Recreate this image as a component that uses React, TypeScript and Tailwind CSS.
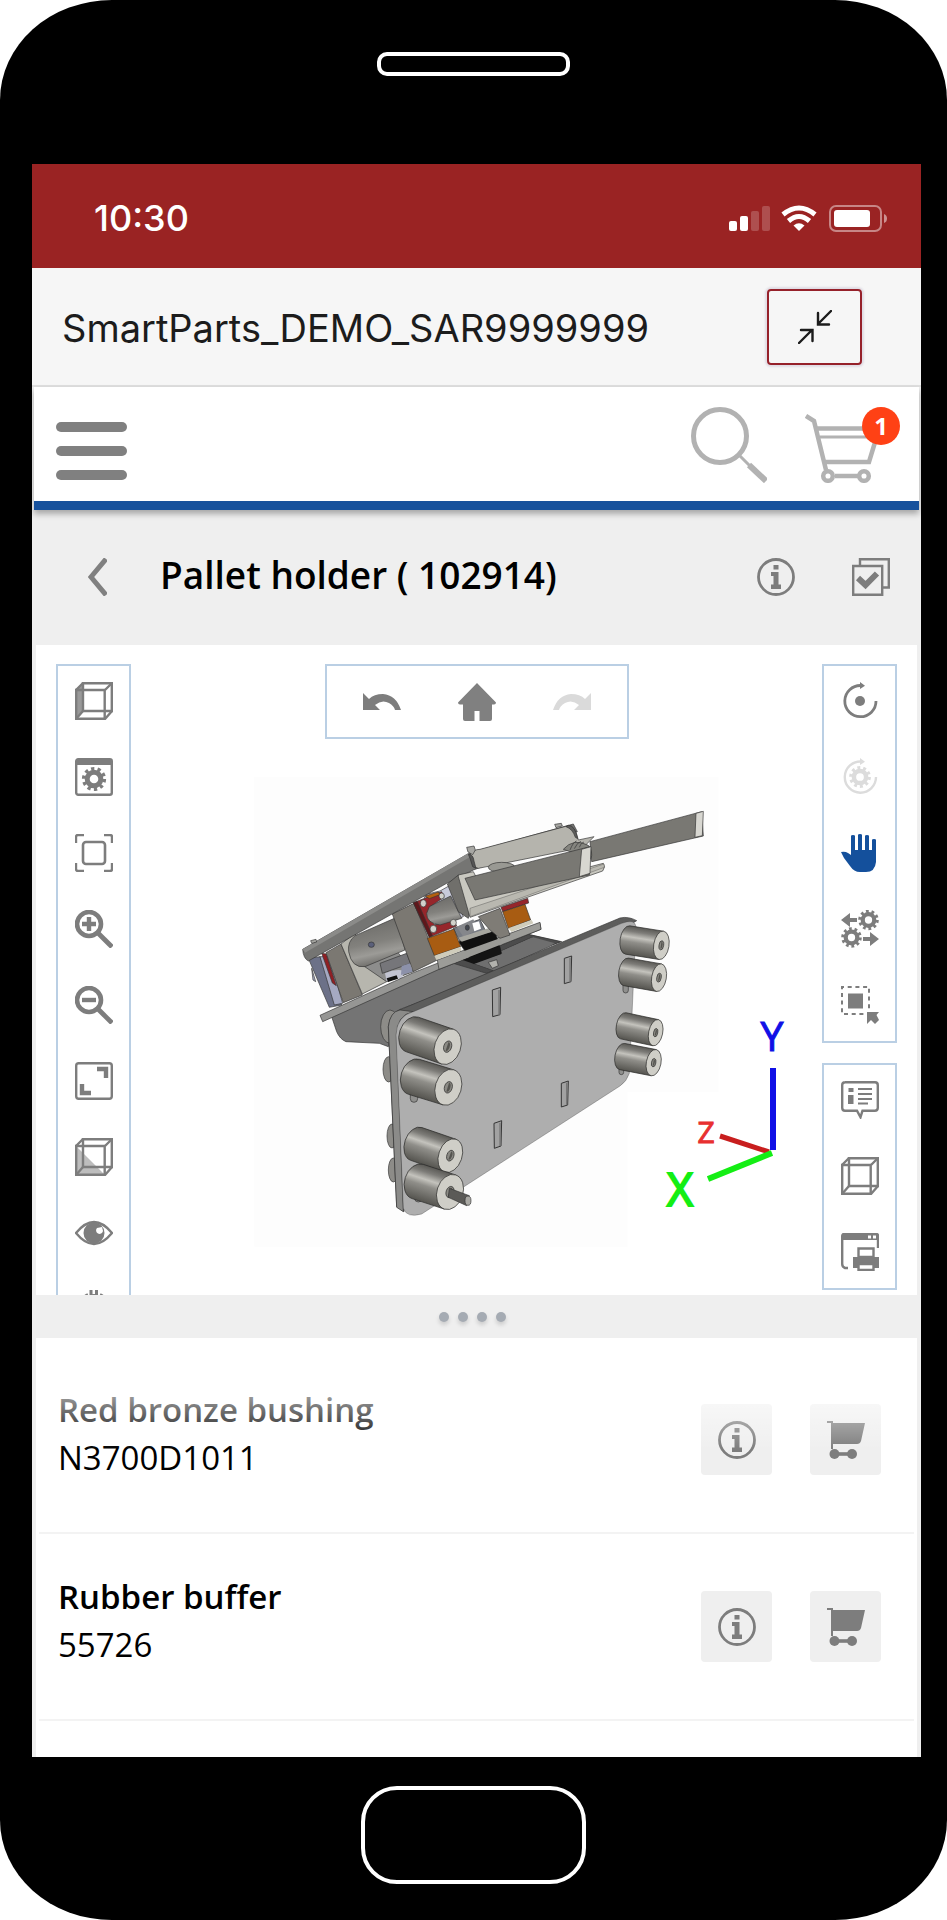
import React from "react";

type IconProps = { children: React.ReactNode; className?: string };

function Icon({ children, className = "text-[#7d7d7d]" }: IconProps) {
  return (
    <svg viewBox="0 0 38 38" fill="none" stroke="currentColor" strokeWidth="2.4" aria-hidden="true" className={`block size-[38px] shrink-0 ${className}`}>
      {children}
    </svg>
  );
}

function Gear({ cx, cy, r }: { cx: number; cy: number; r: number }) {
  const tooth = (2 * Math.PI * r) / 20;
  return (
    <g>
      <circle cx={cx} cy={cy} r={r * 0.68} strokeWidth={r * 0.5} />
      <circle cx={cx} cy={cy} r={r} strokeWidth={r * 0.42} strokeDasharray={`${tooth} ${tooth}`} />
    </g>
  );
}

function CubeLines() {
  return (
    <>
      <path d="M1.200 8h28.500v28.800H1.200zM8 1.200h28.800V29H8z" />
      <path d="M1 8l7-7M30 8l7-7M30 37l7-8M1 37l7-8" />
    </>
  );
}

const CubeSide = () => (
  <Icon>
    <path d="M1 8l7-7v28l-7 8z" fill="#999" stroke="none" />
    <CubeLines />
  </Icon>
);
const CubeShaded = () => (
  <Icon>
    <path d="M1 8l29 29H1z" fill="#bdbdbd" stroke="none" />
    <CubeLines />
  </Icon>
);
const CubeOutline = () => (
  <Icon>
    <CubeLines />
  </Icon>
);
const WindowGear = () => (
  <Icon>
    <rect x="1.200" y="1.200" width="35.600" height="35.600" rx="2" />
    <path d="M1 1h36v6H1z" fill="currentColor" stroke="none" />
    <Gear cx={19} cy={21} r={10} />
  </Icon>
);
const FitView = () => (
  <Icon>
    <path d="M1 9V3q0-2 2-2h6M29 1h6q2 0 2 2v6M37 29v6q0 2-2 2h-6M9 37H3q-2 0-2-2v-6" />
    <rect x="8" y="8" width="22" height="22" rx="3" strokeWidth="2.6" />
  </Icon>
);
const ZoomLens = ({ plus = false }: { plus?: boolean }) => (
  <Icon>
    <circle cx="14" cy="14" r="12" strokeWidth="4.600" />
    <path d="M23 23l14 14" strokeWidth="4.8" />
    <path d={plus ? "M7 14h14M14 7v14" : "M7 14h14"} strokeWidth="4.4" />
  </Icon>
);
const FullScreen = () => (
  <Icon>
    <rect x="1.200" y="1.200" width="35.600" height="35.600" rx="2.5" />
    <path d="M22 7h9v9M7 22v9h9" strokeWidth="4.4" />
  </Icon>
);
const Eye = () => (
  <Icon>
    <path d="M1 19Q10 8 19 8T37 19Q28 30 19 30T1 19z" />
    <circle cx="19" cy="19" r="10.500" fill="currentColor" stroke="none" />
    <path d="M22 14a3.5 3.5 0 1 0 6 3l-1-4z" fill="#fff" stroke="none" />
  </Icon>
);
const GearOnly = () => (
  <Icon>
    <circle cx="19" cy="14" r="7" strokeWidth="6" />
    <path d="M16 0v6M21.500 0v6" strokeWidth="3" />
    <path d="M11 4l2 4M27 4l-2 4" strokeWidth="3" />
  </Icon>
);
const Orbit = () => (
  <Icon>
    <path d="M20 3.5A15.6 15.6 0 1 0 35 19" strokeWidth="2.8" />
    <path d="M19 0l5 3.8L19 7z" fill="currentColor" stroke="none" />
    <circle cx="19" cy="19" r="5" fill="currentColor" stroke="none" />
  </Icon>
);
const OrbitGear = () => (
  <Icon className="text-[#dcdcdc]">
    <path d="M20 3.5A15.6 15.6 0 1 0 35 19" strokeWidth="2.4" />
    <path d="M19 0l5 3.8L19 7z" fill="currentColor" stroke="none" />
    <Gear cx={19} cy={19} r={9} />
  </Icon>
);
const Hand = () => (
  <Icon className="text-[#14509c]">
    <path
      d="M0 18q4-1 7 1l3 2V2q0-1 2-1t2 1v14h3V1q0-1 2-1t2 1v15h3V2q0-1 2-1t2 1v14h3V6q0-1 2-1t2 1v22q-1 10-10 10h-6Q13 38 9 32L3 24Q1 20 0 18z"
      fill="currentColor"
      stroke="none"
    />
  </Icon>
);
const MoveParts = () => (
  <Icon>
    <path d="M0 10l9-7v5h7v4H9v5zM38 29l-9-7v5h-7v4h7v5z" fill="currentColor" stroke="none" />
    <Gear cx={27.5} cy={10} r={8.5} />
    <Gear cx={10.5} cy={27.5} r={8.5} />
  </Icon>
);
const SelectArea = () => (
  <Icon>
    <rect x="1" y="1" width="27" height="27" strokeWidth="2" strokeDasharray="4 3.7" strokeDashoffset="2" />
    <path d="M7 7.5h15v15H7z" fill="currentColor" stroke="none" />
    <path d="M26 26h12l-2.5 3L38 34l-4 4-4-4-4 4z" fill="currentColor" stroke="none" />
  </Icon>
);
const InfoBubble = () => (
  <Icon>
    <path d="M4 1.200h30q2.800 0 2.800 3v22.500q0 3-3 3H21.500l-2 6.500-3.500-6.500H4q-2.800 0-2.800-3V4q0-2.800 3-2.800z" />
    <path d="M17 8h14M17 13h14M17 18h14M17 22.500h10" strokeWidth="2" />
    <path d="M7.500 7h5v4h-5zM7 14h5.500v9H7z" fill="currentColor" stroke="none" />
  </Icon>
);
const PrintView = () => (
  <Icon>
    <path d="M7 35H4q-2.800-1-2.800-4V3q0-2 2-2h32q1.800 0 1.800 2v12" />
    <path d="M1 1h36v6H1z" fill="currentColor" stroke="none" />
    <path d="M27 2.500h3v3h-3zM32 2.500h3v3h-3z" fill="#fff" stroke="none" />
    <path d="M12 24h26v11H12z" fill="currentColor" stroke="none" />
    <path d="M17.500 15.500h15V24h-15zM17.500 31h15v6h-15z" fill="#fff" />
  </Icon>
);
const Undo = () => (
  <Icon>
    <path d="M0 10v17h17l-5-5q7-6 14-2 5 3 6 7h6Q33 12 20 11 11 11 6 16z" fill="currentColor" stroke="none" />
  </Icon>
);
const Redo = () => (
  <Icon className="text-[#dadada]">
    <path d="M38 10v17H21l5-5q-7-6-14-2-5 3-6 7H0Q5 12 18 11q9 0 14 5z" fill="currentColor" stroke="none" />
  </Icon>
);
const Home = () => (
  <Icon className="text-[#808080]">
    <path d="M19 0l19 19.500q0 2-2 2h-2V36q0 2-2 2H21.500V28h-5v10H7q-2 0-2-2V21.500H2q-2 0-2-2z" fill="currentColor" stroke="none" />
  </Icon>
);
const Info = () => (
  <Icon>
    <circle cx="19" cy="19" r="17.500" strokeWidth="2.800" />
    <path d="M16.500 7h5v4.500h-5zM14 14h7.500v12.500H24V31H14v-4.500h2.500V18H14z" fill="currentColor" stroke="none" />
  </Icon>
);
const CheckStack = () => (
  <Icon>
    <path d="M8 7V1.200h28.800V29.500H31" />
    <path d="M1.200 8h29v28.800h-29z" />
    <path d="M6 20l7.500 7L25 15.500" strokeWidth="6" />
  </Icon>
);
const Cart = () => (
  <Icon>
    <path d="M0 0h6v2h32l-4 18q-1 3-4 3H6v5H4V2H0z" fill="currentColor" stroke="none" />
    <circle cx="7.500" cy="33" r="5" fill="currentColor" stroke="none" />
    <circle cx="25" cy="33" r="5" fill="currentColor" stroke="none" />
    <path d="M7 33h19" strokeWidth="3.600" />
  </Icon>
);

type Tool = { label: string; icon: React.ReactNode; disabled?: boolean };

function Toolbar({ label, tools, row = false }: { label: string; tools: Tool[]; row?: boolean }) {
  return (
    <div
      role="toolbar"
      aria-label={label}
      className={
        row
          ? "flex h-[75px] items-center gap-[57px] border-2 border-[#bacfe4] bg-white px-9"
          : "flex w-[75px] flex-col items-center gap-[38px] border-2 border-[#bacfe4] bg-white pt-4 pb-[17px]"
      }
    >
      {tools.map((tool) => (
        <button key={tool.label} type="button" aria-label={tool.label} disabled={tool.disabled}>
          {tool.icon}
        </button>
      ))}
    </div>
  );
}

const viewTools: Tool[] = [
  { label: "Views", icon: <CubeSide /> },
  { label: "Settings", icon: <WindowGear /> },
  { label: "Fit to view", icon: <FitView /> },
  { label: "Zoom in", icon: <ZoomLens plus /> },
  { label: "Zoom out", icon: <ZoomLens /> },
  { label: "Full screen", icon: <FullScreen /> },
  { label: "Shading", icon: <CubeShaded /> },
  { label: "Visibility", icon: <Eye /> },
  { label: "Options", icon: <GearOnly /> },
];
const historyTools: Tool[] = [
  { label: "Undo", icon: <Undo /> },
  { label: "Home view", icon: <Home /> },
  { label: "Redo", icon: <Redo />, disabled: true },
];
const motionTools: Tool[] = [
  { label: "Orbit", icon: <Orbit /> },
  { label: "Orbit part", icon: <OrbitGear />, disabled: true },
  { label: "Pan", icon: <Hand /> },
  { label: "Move parts", icon: <MoveParts /> },
  { label: "Select area", icon: <SelectArea /> },
];
const outputTools: Tool[] = [
  { label: "Annotations", icon: <InfoBubble /> },
  { label: "Wireframe", icon: <CubeOutline /> },
  { label: "Print", icon: <PrintView /> },
];

function Cylinder({ x, y, rx, ry, length, angle }: { x: number; y: number; rx: number; ry: number; length: number; angle: number }) {
  return (
    <g transform={`translate(${x} ${y}) rotate(${angle})`} stroke="#2c2c2a" strokeWidth="2">
      <path d={`M0 ${-ry}H${-length}A${rx} ${ry} 0 0 0 ${-length} ${ry}H0z`} fill="url(#steel)" />
      <ellipse rx={rx} ry={ry} fill="#cfcec7" />
      <ellipse rx={rx * 0.3} ry={ry * 0.32} fill="#8b8a84" />
      <path d={`M${-rx * 0.05} ${-ry * 0.25}a${rx * 0.2} ${ry * 0.25} 0 0 1 0 ${ry * 0.5}`} fill="#55544f" stroke="none" />
    </g>
  );
}

function Model() {
  return (
    <g transform="translate(204 115) scale(.33333)" stroke="#343434" strokeWidth="2" strokeLinejoin="round">
      <path d="M43 50H1436V995H1163V1460H43z" fill="#fdfdfd" stroke="none" />

      {/* rear bracket */}
      <path d="M275 770L640 600 850 520 960 545 640 690 480 748 445 860 418 850 318 845Q300 838 290 815z" fill="#747474" />
      <path d="M640 610L860 522 965 545 940 553 875 532 700 610 760 632 740 640z" fill="#4c4c4c" />
      <path d="M700 610L880 532 945 550 765 630z" fill="#6f6f6f" stroke="none" />
      <ellipse cx="450" cy="800" rx="28" ry="50" fill="#8d8c88" />
      <ellipse cx="446" cy="928" rx="17" ry="38" fill="#8d8c88" />
      <ellipse cx="456" cy="1128" rx="15" ry="36" fill="#8d8c88" />
      <ellipse cx="460" cy="1230" rx="15" ry="36" fill="#8d8c88" />

      {/* upper carriage, lower deck */}
      <path d="M205 595L240 590 305 735 268 742z" fill="#6c7188" />
      <path d="M215 625l12 40-8-5zM240 590l28 0 40 140-25 5z" fill="#a5a9c2" />
      <path d="M245 580l14 2 30 95-12-8z" fill="#8f1f24" />
      <path d="M258 578L303 552 367 705 310 728z" fill="#7b7872" />
      <path d="M303 552L345 520 440 665 367 702z" fill="#b7b6ae" />
      <path d="M345 600L460 560 520 635 440 665z" fill="#8d8d8c" />
      <path d="M420 610l80-30 12 30-85 30z" fill="#76767a" />
      <path d="M435 640q30-15 60-8l-10 22-45 10z" fill="#c2c4d2" stroke="none" />
      <path d="M440 655l30-9 4 10-30 10z" fill="#111" stroke="none" />
      <path d="M485 618l25-8 8 25-35 10z" fill="#8c91aa" stroke="none" />
      <path d="M345 527L470 472 495 570 375 620Q335 625 326 575 322 545 345 527z" fill="url(#tube)" />
      <ellipse cx="394" cy="554" rx="9" ry="8" fill="#5b607a" />
      <path d="M457 462L522 430 592 600 520 635z" fill="#7b7872" />
      <path d="M240 766L520 638 900 490 903 508 597 628 248 785z" fill="#969694" />
      <path d="M592 600L900 487 903 508 597 628z" fill="#9c9c98" />
      <path d="M640 505L720 478 745 530 665 555z" fill="#777b83" />
      <path d="M650 500l50-22 15 30-45 22z" fill="#85878b" stroke="none" />
      <ellipse cx="682" cy="503" rx="6" ry="8" fill="#424750" />
      <path d="M697 490l20-6 6 22-20 8z" fill="#fff" stroke="none" />
      <path d="M655 545L765 512 785 580 700 608z" fill="#101010" />
      <path d="M655 533L745 505 755 515 665 545z" fill="#a6a69f" stroke="none" />
      <path d="M620 592L780 535 787 552 640 610z" fill="#9a9a96" stroke="none" />
      <path d="M668 600l112-42 4 24-82 30z" fill="#141414" stroke="none" />
      <path d="M745 607l25-8 5 18-18 8z" fill="#b2b2ad" />
      <path d="M715 470L780 445 810 525 780 535 750 510z" fill="#7f7c76" />

      {/* flange and bushings */}
      <path d="M550 405L600 393 632 375 670 470 590 500z" fill="#c8cada" />
      <path d="M520 428L605 395 612 412 570 440Q555 470 585 495L640 478 650 498 568 532z" fill="#96262b" />
      <path d="M520 428l12-4 45 103-9 5z" fill="#5f171b" />
      <path d="M555 408l40-12 5 8-32 12z" fill="#b4600f" />
      <path d="M568 440L632 408 665 475 600 495Q560 490 560 460z" fill="url(#tube)" />
      <g fill="#d2d2cc">
        <ellipse cx="550" cy="430" rx="9" ry="11" />
        <ellipse cx="605" cy="408" rx="8" ry="9" />
        <ellipse cx="580" cy="507" rx="10" ry="11" />
        <ellipse cx="640" cy="488" rx="9" ry="10" />
      </g>
      <path d="M562 535L642 507 662 560 583 587z" fill="#a85c12" />
      <path d="M583 587l79-27 2 12-75 28z" fill="#cfccbb" stroke="none" />
      <path d="M783 442l80-27 3 14-78 26z" fill="#96262b" />
      <path d="M788 455L855 433 872 480 805 505z" fill="#a85c12" />
      <path d="M805 505l70-25 5 10-65 26z" fill="#cfccbb" stroke="none" />

      {/* upper frame */}
      <path d="M188 568L690 278 1000 192 1012 215 700 330 620 370 205 603Q190 595 188 568z" fill="#757573" />
      <path d="M188 568L685 280 695 288 195 578z" fill="#8b8b89" stroke="none" />
      <path d="M690 285Q700 268 720 268L985 197Q1005 195 1015 240L1062 230 1030 262 715 325 700 320z" fill="#b5b4ad" />
      <path d="M685 283q15 0 17 20l6 22-10-5-8-25z" fill="#555" />
      <path d="M985 196q20 0 28 40l-7-4q-8-25-28-32z" fill="#5e5e5c" />
      <path d="M680 262l22-4 4 12-8 14-14-8zM944 193l20-3 3 8-19 5zM212 542l16-4 2 8-15 4z" fill="#a7a7a3" />
      <path d="M1050 245L1385 155 1390 228 1055 305z" fill="#797873" />
      <path d="M1368 160l22-6-3 73-22 5z" fill="#d8d7d1" />
      <ellipse cx="785" cy="322" rx="40" ry="15" fill="#999993" />
      <path d="M970 268q30-35 75-12 15 20 8 40z" fill="#85857f" />
      <path d="M990 270q10-25 20-27M1003 266q10-20 20-22M1018 262q5-15 14-16" fill="none" />
      <path d="M622 372L655 345 690 445 685 475 655 455z" fill="#706f6b" />
      <path d="M655 345L700 335 735 402 1090 310Q1098 320 1088 333L690 472 655 350z" fill="#c9c8c0" />
      <path d="M690 445L1092 312 1093 322 690 470z" fill="#b9b8b0" strokeWidth="1" />
      <path d="M675 355L1050 260 1048 345 705 420z" fill="#797873" />
      <path d="M1025 268L1053 260 1050 340 1018 350z" fill="#d8d7d1" />

      {/* mounting plate */}
      <path d="M445 800Q450 755 490 745L1140 474Q1165 468 1190 482L1160 500 515 760 478 800 492 1355 470 1340z" fill="#5d5d5c" />
      <path d="M445 800Q450 755 480 750L520 755Q470 765 470 825L490 1355 470 1342z" fill="#8b8b89" />
      <path d="M468 825Q470 768 520 755L1145 490Q1185 475 1188 500L1168 940Q1160 965 1140 978L680 1275 545 1362Q500 1375 490 1345z" fill="#aeaeae" strokeWidth="1" />
      <g fill="#a2a2a2" strokeWidth="3">
        <path d="M757 690l25-8-2 82-22 6z" />
        <path d="M973 595l22-7-2 77-20 6z" />
        <path d="M762 1090l23-8-2 76-20 7z" />
        <path d="M964 970l21-7-2 72-19 6z" />
      </g>
      <path d="M777 690v76M990 593v72M780 1088v70M980 968v67" strokeWidth="4" stroke="#777" />
      <g fill="#8f8f8d">
        <rect x="511" y="985" width="22" height="42" rx="11" />
        <rect x="524" y="1290" width="22" height="36" rx="11" />
        <rect x="1149" y="655" width="16" height="44" rx="8" />
        <rect x="1137" y="900" width="14" height="44" rx="7" />
      </g>
      <Cylinder x={623} y={860} rx={39} ry={55} length={112} angle={19} />
      <Cylinder x={625} y={982} rx={39} ry={55} length={108} angle={17} />
      <Cylinder x={631} y={1187} rx={35} ry={52} length={108} angle={19} />
      <Cylinder x={630} y={1296} rx={39} ry={54} length={102} angle={18} />
      <path d="M628 1285l60 22-8 30-55-25z" fill="#5b5a57" />
      <ellipse cx="684" cy="1322" rx="9" ry="14" fill="#aaa9a4" />
      <Cylinder x={1264} y={556} rx={23} ry={43} length={102} angle={9} />
      <Cylinder x={1257} y={653} rx={22} ry={42} length={100} angle={10} />
      <Cylinder x={1247} y={818} rx={21} ry={40} length={99} angle={12} />
      <Cylinder x={1241} y={908} rx={22} ry={40} length={96} angle={11} />
    </g>
  );
}

function Scene() {
  return (
    <svg viewBox="0 0 881 650" role="img" aria-label="3D view of the pallet holder" className="absolute inset-0 size-full font-['Open_Sans',sans-serif]">
      <defs>
        <linearGradient id="steel" x1="0" y1="0" x2="0" y2="1">
          <stop offset="0" stopColor="#5a5955" />
          <stop offset=".18" stopColor="#7d7c78" />
          <stop offset=".38" stopColor="#c4c3bd" />
          <stop offset=".55" stopColor="#8f8e89" />
          <stop offset="1" stopColor="#55544f" />
        </linearGradient>
        <linearGradient id="tube" x1=".35" y1="0" x2=".6" y2="1">
          <stop offset="0" stopColor="#6a6966" />
          <stop offset=".5" stopColor="#82817d" />
          <stop offset=".72" stopColor="#9c9b97" />
          <stop offset="1" stopColor="#62615e" />
        </linearGradient>
      </defs>
      <Model />
      <g strokeWidth="6" fill="none">
        <path d="M684 491l49 16" stroke="#c81e1e" strokeWidth="5" />
        <path d="M672 534l64-26" stroke="#14ee14" />
        <path d="M737 423v82" stroke="#1010e6" />
      </g>
      <g textAnchor="middle">
        <text x="736" y="406" fontSize="41" fill="#1010e6" stroke="#1010e6">Y</text>
        <text x="670" y="498" fontSize="30" fill="#e83030" stroke="#e83030">Z</text>
        <text x="644" y="561" fontSize="45" fill="#14ee14" stroke="#14ee14" strokeWidth="2">X</text>
      </g>
    </svg>
  );
}

function StatusBar() {
  return (
    <div className="flex h-[104px] items-center justify-between bg-[#9a2323] pt-1 pr-[34px] pl-[62px]">
      <time className="font-[Inter,sans-serif] text-[36px] leading-10 font-medium text-white">10:30</time>
      <svg viewBox="0 0 160 28" className="h-7 w-40" aria-label="Signal, wifi and battery">
        <g fill="#fff">
          <rect x="2" y="17" width="8" height="10" rx="2" />
          <rect x="13" y="12" width="8" height="15" rx="2" />
          <g opacity=".2">
            <rect x="24" y="7" width="8" height="20" rx="2" />
            <rect x="35" y="2" width="8" height="25" rx="2" />
          </g>
          <path d="M72 27l-5.500-5.500q5.500-4.500 11 0z" />
        </g>
        <g fill="none" stroke="#fff" strokeWidth="5">
          <path d="M56 10.500Q72-2.500 88 10.500" />
          <path d="M61.500 17Q72 8 82.500 17" />
        </g>
        <rect x="103" y="2" width="51" height="25" rx="6" fill="none" stroke="#fff" strokeOpacity=".45" strokeWidth="2" />
        <rect x="107" y="6" width="36" height="17" rx="3" fill="#fff" />
        <path d="M157 10q3 1 3 4.500t-3 4.500z" fill="#fff" fillOpacity=".5" />
      </svg>
    </div>
  );
}

const parts = [
  { name: "Red bronze bushing", number: "N3700D1011" },
  { name: "Rubber buffer", number: "55726" },
];

export default function App() {
  return (
    <div className="bg-white">
      <div className="flex min-h-screen flex-col rounded-[112px/100px] bg-black pr-[26px] pl-8">
        <div className="flex h-[164px] justify-center pt-[52px] pr-1.5">
          <div className="h-6 w-[193px] rounded-[10px] border-4 border-white" />
        </div>

        <div className="flex flex-1 flex-col bg-[#efefef]">
          <StatusBar />
          <div className="flex h-[119px] items-center justify-between border-b-2 border-[#dfdfdf] bg-[#f6f6f6] pr-[59px] pl-[30px]">
            <h1 className="pt-0.5 font-[Inter,sans-serif] text-[38px] leading-[48px] text-[#1c1c1c]">SmartParts_DEMO_SAR9999999</h1>
            <button type="button" aria-label="Exit full screen" className="flex h-[76px] w-[95px] items-center justify-center rounded border-2 border-[#96212a] shadow-[0_0_2px_2px_#e0dce4]">
              <svg viewBox="0 0 34 34" fill="none" stroke="#1c1c1c" strokeWidth="2.400" className="size-[34px]">
                <path d="M33 1L20 14M20 3v11.500h11M1 33l13-13M3 20h11.500v11" strokeLinecap="round" />
              </svg>
            </button>
          </div>

          <header className="z-10 mx-0.5 flex h-[123px] justify-between border-b-9 border-[#17519c] bg-white pt-5 pr-[19px] pl-[22px] shadow-[0_4px_6px_#0000004d]">
            <button type="button" aria-label="Menu" className="mt-[15px] flex h-[58px] w-[71px] flex-col justify-between">
              <span className="h-2.5 w-full rounded-full bg-[#808080]" />
              <span className="h-2.5 w-full rounded-full bg-[#808080]" />
              <span className="h-2.5 w-full rounded-full bg-[#808080]" />
            </button>
            <div className="flex gap-[38px]">
              <button type="button" aria-label="Search" className="h-[76px]">
                <svg viewBox="0 0 76 76" fill="none" stroke="#b2b2b2" className="size-[76px]">
                  <circle cx="29" cy="29" r="26.500" strokeWidth="5" />
                  <path d="M48 48l12 12" strokeWidth="3" />
                  <path d="M58 58l17 16" strokeWidth="6" />
                </svg>
              </button>
              <button type="button" aria-label="Cart, 1 item" className="relative h-[76px] w-[95px]">
                <svg viewBox="0 0 95 76" fill="none" stroke="#b2b2b2" strokeWidth="4.500" className="h-[76px] w-[95px]">
                  <path d="M1 9l8 5 12 49M12 21.500h62" />
                  <path d="M15 30h56" strokeWidth="3" />
                  <path d="M71 32l-7 23H20" />
                  <path d="M30 69h24" />
                  <circle cx="23" cy="69" r="4.800" />
                  <circle cx="59" cy="69" r="4.800" />
                </svg>
                <span className="absolute top-0 right-0 flex size-[38px] items-center justify-center rounded-full bg-[#ff4115] font-['Open_Sans',sans-serif] text-2xl font-bold text-white">1</span>
              </button>
            </div>
          </header>

          <div className="flex flex-1 flex-col px-1 font-['Open_Sans','Noto_Sans',sans-serif]">
            <div className="flex h-[135px] items-center pr-[27px] pb-0.5 pl-[52px]">
              <button type="button" aria-label="Back" className="mr-[53px]">
                <svg viewBox="0 0 19 38" fill="none" stroke="#808080" strokeWidth="5" className="h-[38px] w-[19px]">
                  <path d="M18 1L3 19l15 18" />
                </svg>
              </button>
              <h2 className="flex-1 pb-1 text-[37px] leading-[48px] font-semibold text-black">Pallet holder ( 102914)</h2>
              <div className="flex gap-[57px]">
                <button type="button" aria-label="Part information"><Info /></button>
                <button type="button" aria-label="Multiple selection"><CheckStack /></button>
              </div>
            </div>

            <main className="relative h-[650px] overflow-hidden bg-white">
              <Scene />
              <div className="relative flex items-start justify-between px-5 pt-[19px]">
                <Toolbar label="View" tools={viewTools} />
                <Toolbar label="History" tools={historyTools} row />
                <div className="flex flex-col gap-5">
                  <Toolbar label="Navigation" tools={motionTools} />
                  <Toolbar label="Output" tools={outputTools} />
                </div>
              </div>
            </main>

            <div className="flex h-[43px] items-center justify-center gap-[9px] pr-2">
              {[0, 1, 2, 3].map((dot) => (
                <span key={dot} className="size-2.5 rounded-full bg-[#a5abb3] shadow-[0_3px_4px_#00000026]" />
              ))}
            </div>

            <section aria-label="Parts" className="relative flex-1 bg-white px-[3px] pt-[9px]">
              <ul>
                {parts.map((part) => (
                  <li key={part.number} className="flex h-[187px] items-center justify-between border-b-2 border-[#f3f3f3] pr-[33px] pl-[19px]">
                    <div className="pb-3 text-[33px] leading-[48px] text-black">
                      <h3 className="font-semibold">{part.name}</h3>
                      <p>{part.number}</p>
                    </div>
                    <div className="flex gap-[38px]">
                      <button type="button" aria-label={`Information on ${part.name}`} className="flex size-[71px] items-center justify-center rounded bg-[#efefef]"><Info /></button>
                      <button type="button" aria-label={`Add ${part.name} to cart`} className="flex size-[71px] items-center justify-center rounded bg-[#efefef]"><Cart /></button>
                    </div>
                  </li>
                ))}
              </ul>
              <div className="pointer-events-none absolute inset-x-0 top-0 h-28 bg-linear-to-b from-white from-20% to-transparent" />
            </section>
          </div>
        </div>

        <div className="flex h-[163px] justify-center pt-[29px] pr-1.5">
          <button type="button" aria-label="Home button" className="h-[98px] w-[225px] rounded-[36px] border-4 border-white" />
        </div>
      </div>
    </div>
  );
}
